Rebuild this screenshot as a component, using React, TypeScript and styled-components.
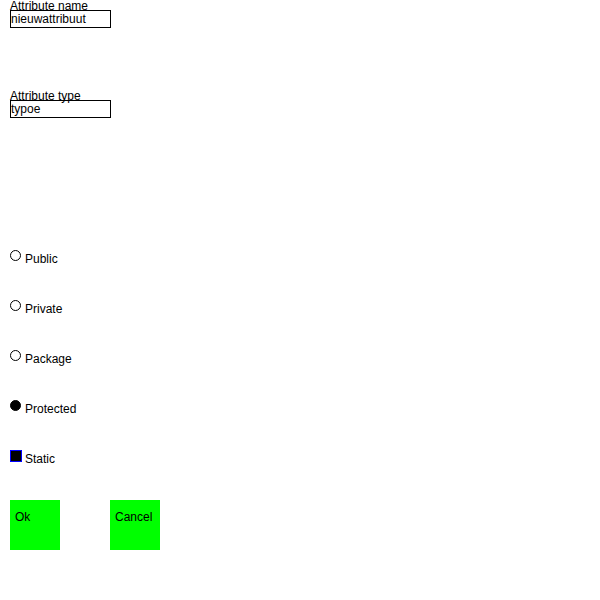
import React from "react";
import styled, { createGlobalStyle } from "styled-components";

const Global = createGlobalStyle`
  html, body { margin: 0; padding: 0; background: #fff; }
  body { font-family: "Liberation Sans", Arial, sans-serif; font-size: 12px; color: #000; }
`;

const Form = styled.div`
  display: flex;
  flex-direction: column;
  padding-left: 10px;
  width: 590px;
  height: 600px;
`;

const Field = styled.div<{ $h: number }>`
  display: flex;
  flex-direction: column;
  align-items: flex-start;
  height: ${(p) => p.$h}px;
`;

const Label = styled.div`
  height: 10px;
  line-height: 12px;
  font-size: 12px;
  white-space: nowrap;
`;

const TextBox = styled.div`
  box-sizing: border-box;
  width: 101px;
  height: 18px;
  border: 1px solid #000;
  font-size: 12px;
  line-height: 16px;
  white-space: nowrap;
  overflow: hidden;
`;

const OptionRow = styled.div`
  display: flex;
  align-items: flex-start;
  height: 50px;
`;

const Radio = styled.span<{ $on?: boolean }>`
  box-sizing: border-box;
  width: 11px;
  height: 11px;
  border-radius: 50%;
  border: 1px solid #000;
  background: ${(p) => (p.$on ? "#000" : "#fff")};
  margin-right: 4px;
`;

const Check = styled.span`
  box-sizing: border-box;
  width: 12px;
  height: 12px;
  border: 1.5px solid #0000ff;
  background: #000;
  margin-right: 3px;
`;

const OptionText = styled.span`
  font-size: 12px;
  line-height: 12px;
  margin-top: 3px;
`;

const Buttons = styled.div`
  display: flex;
  gap: 50px;
`;

const Button = styled.div`
  box-sizing: border-box;
  width: 50px;
  height: 50px;
  background: #00ff00;
  padding: 10px 0 0 5px;
  font-size: 12px;
  line-height: 14px;
`;

export default function App() {
  return (
    <>
      <Global />
      <Form>
        <Field $h={90}>
          <Label>Attribute name</Label>
          <TextBox>nieuwattribuut</TextBox>
        </Field>
        <Field $h={160}>
          <Label>Attribute type</Label>
          <TextBox>typoe</TextBox>
        </Field>
        <OptionRow>
          <Radio />
          <OptionText>Public</OptionText>
        </OptionRow>
        <OptionRow>
          <Radio />
          <OptionText>Private</OptionText>
        </OptionRow>
        <OptionRow>
          <Radio />
          <OptionText>Package</OptionText>
        </OptionRow>
        <OptionRow>
          <Radio $on />
          <OptionText>Protected</OptionText>
        </OptionRow>
        <OptionRow>
          <Check />
          <OptionText>Static</OptionText>
        </OptionRow>
        <Buttons>
          <Button>Ok</Button>
          <Button>Cancel</Button>
        </Buttons>
      </Form>
    </>
  );
}
